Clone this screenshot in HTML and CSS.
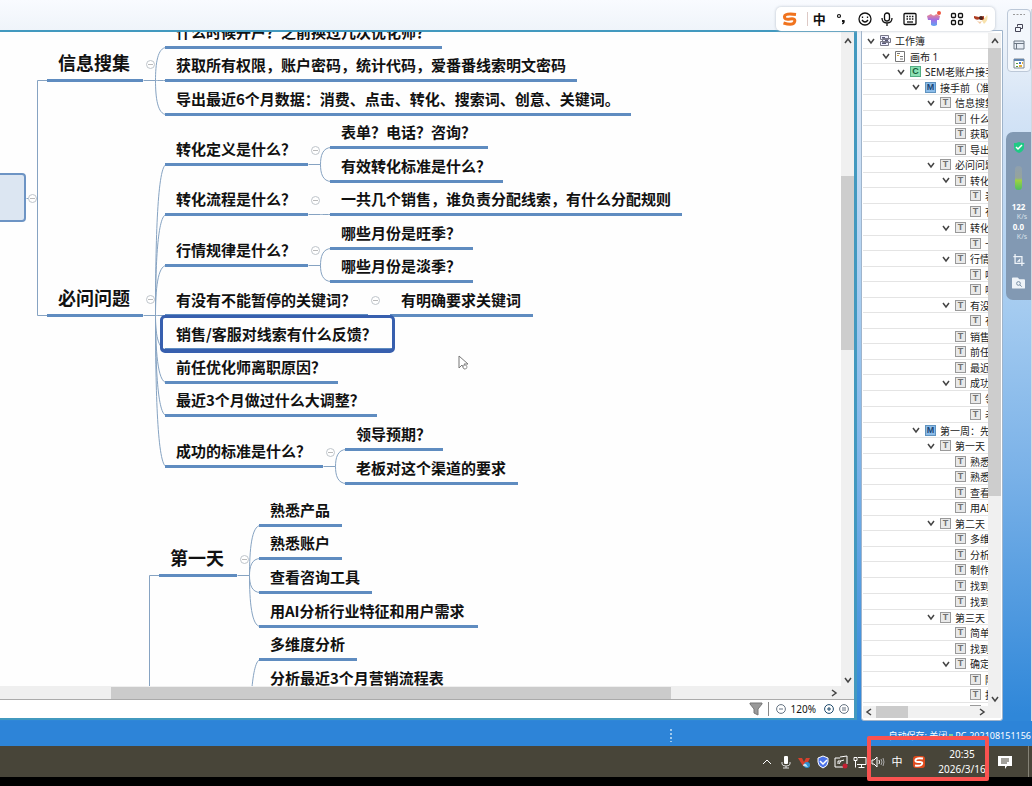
FILE: index.html
```html
<!DOCTYPE html>
<html lang="zh-CN">
<head>
    <meta charset="UTF-8">
    <meta name="viewport" content="width=device-width, initial-scale=1.0">
    <title>SEM老账户接手</title>
    <link rel="stylesheet" href="styles.css">
    <script src="app.js" defer></script>
</head>
<body>
    <div class="desktop">
        <div class="workspace">
            <main class="window">
                <div class="canvas-row">
                    <div class="canvas" id="canvas">
                        <svg class="links" id="links"></svg>
                        <div class="root-topic"></div>
                        <svg class="cursor" viewBox="0 0 10 16"><path d="M1 1v12l3-3 2 4 2-1-2-4h4z" fill="#fff" stroke="#777"/><circle cx="7" cy="12" r="2" fill="#fff" stroke="#999"/></svg>
                    </div>
                    <div class="vscroll">
                        <svg class="chev" viewBox="0 0 8 8"><path d="M1 6l3-4 3 4"/></svg>
                        <div class="vtrack"><div class="vthumb"></div></div>
                        <svg class="chev" viewBox="0 0 8 8"><path d="M1 2l3 4 3-4"/></svg>
                    </div>
                </div>
                <div class="hscroll">
                    <div class="hthumb"></div>
                    <svg class="chev" viewBox="0 0 8 8"><path d="M2 1l4 3-4 3"/></svg>
                </div>
                <div class="zoombar">
                    <button class="plain" aria-label="筛选"><svg width="14" height="14" viewBox="0 0 14 14"><path d="M1 1h12v1L9 7v6l-4-2V7L1 2z" fill="#999" stroke="#777"/></svg></button>
                    <span class="divider"></span>
                    <button class="plain" aria-label="缩小"><svg width="10" height="10" viewBox="0 0 10 10" class="zoom-icon"><circle cx="5" cy="5" r="4.4"/><path d="M3 5h4"/></svg></button>
                    <span class="zoom-value">120%</span>
                    <button class="plain" aria-label="放大"><svg width="10" height="10" viewBox="0 0 10 10" class="zoom-icon strong"><circle cx="5" cy="5" r="4.4"/><path d="M3 5h4M5 3v4"/></svg></button>
                    <button class="plain" aria-label="实际大小"><svg width="10" height="10" viewBox="0 0 10 10" class="zoom-icon"><circle cx="5" cy="5" r="4.4"/><path d="M3 4h4M3 6h4"/></svg></button>
                </div>
            </main>

            <aside class="outline">
                <div class="outline-body">
                    <ul class="tree" id="tree"></ul>
                    <div class="vscroll slim">
                        <svg class="chev" viewBox="0 0 8 8"><path d="M1 6l3-4 3 4"/></svg>
                        <div class="vtrack"><div class="vthumb long"></div></div>
                        <svg class="chev" viewBox="0 0 8 8"><path d="M1 2l3 4 3-4"/></svg>
                    </div>
                </div>
                <div class="outline-scroll">
                    <svg class="chev" viewBox="0 0 8 8"><path d="M6 1L2 4l4 3"/></svg>
                    <div class="outline-thumb"></div>
                    <svg class="chev" viewBox="0 0 8 8"><path d="M2 1l4 3-4 3"/></svg>
                </div>
            </aside>

            <div class="side">
                <div class="dock">
                    <svg width="14" height="3" viewBox="0 0 14 3"><path d="M1 1.500h12" stroke="#999" stroke-width="1" stroke-dasharray="2 1.500"/></svg>
                    <button class="plain" aria-label="还原"><svg width="8" height="8" viewBox="0 0 8 8" fill="none" stroke="#445"><path d="M2.500 2.500v-2h5v4h-2M.5 3.500h5v4h-5z"/></svg></button>
                    <button class="plain" aria-label="概要"><svg width="12" height="10" viewBox="0 0 12 10" fill="#e7edf5" stroke="#6b7683"><path d="M1 1h10v8H1zM1 3.500h10M3.500 3.500V9"/></svg></button>
                    <button class="plain" aria-label="面板"><svg width="12" height="11" viewBox="0 0 12 11"><path d="M1 1h10v9H1z" fill="#fff" stroke="#7c8791"/><path d="M1 2h10" stroke="#6286b0" stroke-width="2"/><path d="M3 5h2v1H3zM3 8h2v1H3z" fill="#5a9b3c"/><path d="M6 4h2v2H6z" fill="#4474c2"/><path d="M9 4h1v2H9zM6 7h3v2H6z" fill="#e2ac38"/></svg></button>
                </div>
                <div class="meter">
                    <svg width="12" height="13" viewBox="0 0 12 13"><path d="M6 1q2 1 5 1v4q0 4-5 6-5-2-5-6V2q3 0 5-1z" fill="#1fc985"/><path d="M3 6l2 2 4-4" fill="none" stroke="#fff" stroke-width="1.500"/></svg>
                    <span class="gauge"></span>
                    <div class="speed"><b>122</b><span class="up">K/s</span><b>0.0</b><span class="down">K/s</span></div>
                    <button class="plain" aria-label="截图"><svg width="14" height="14" viewBox="0 0 14 14" fill="none" stroke="#eef3f8" stroke-width="1.500"><path d="M1 3h10v11M3 0v11h11"/><path d="M5 9l4-4v4z" fill="#eef3f8" stroke="none"/></svg></button>
                    <button class="plain" aria-label="文件搜索"><svg width="14" height="12" viewBox="0 0 14 12"><path d="M1 0h5l2 2h5q1 0 1 1v8q0 1-1 1H1q-1 0-1-1V1q0-1 1-1z" fill="#eef3f8"/><circle cx="7" cy="6.500" r="2" fill="none" stroke="#71889f"/><path d="M8.500 8l2 2" stroke="#71889f"/></svg></button>
                </div>
            </div>
        </div>

        <div class="statusline">
            <span class="grip"></span>
            <span>自动保存: 关闭</span><span class="dot"></span><span>PC-202108151156</span>
        </div>

        <footer class="taskbar">
            <div class="tray">
                <button class="plain" aria-label="显示隐藏的图标"><svg width="14" height="14" viewBox="0 0 14 14" fill="none" stroke="#fff"><path d="M3 9l4-4 4 4"/></svg></button>
                <button class="plain" aria-label="麦克风"><svg width="14" height="14" viewBox="0 0 14 14"><rect x="5" y="1" width="4" height="8" rx="1" fill="#fff"/><path d="M3 7v2q0 2 4 2t4-2V7M7 11v2M4 13h6" fill="none" stroke="#ddd"/></svg></button>
                <button class="plain" aria-label="语音"><svg width="14" height="14" viewBox="0 0 14 14"><path d="M1 3h4l2 4 2-4h4L9 11H6z" fill="#d6402d"/><circle cx="10" cy="10" r="3" fill="#2d92d4"/><path d="M6 11q0-3 3-2l2 3z" fill="#bce1f5"/></svg></button>
                <button class="plain" aria-label="安全"><svg width="14" height="14" viewBox="0 0 14 14"><path d="M7 1l5 2v4q0 4-5 6-5-2-5-6V3z" fill="#4b72e9" stroke="#fff"/><path d="M4 6l3 3 4-4" fill="none" stroke="#fff" stroke-width="1.500"/></svg></button>
                <button class="plain" aria-label="录制"><svg width="14" height="14" viewBox="0 0 14 14" fill="none" stroke="#fff"><path d="M9 12H1V3h5M6 2l7-1v8M4 9V6h3"/><path d="M5 9q1-4 5-4"/><circle cx="11" cy="11" r="2.500" fill="#c51f32" stroke="none"/></svg></button>
                <button class="plain" aria-label="网络"><svg width="14" height="14" viewBox="0 0 14 14" fill="none" stroke="#fff"><path d="M5 2.500h8v7H4M8.500 9.500v3M5.500 12.500h6M1 2.500h3v3H1zM2.500 5.500v7"/></svg></button>
                <button class="plain" aria-label="音量"><svg width="14" height="14" viewBox="0 0 14 14" fill="none" stroke="#fff"><path d="M1 5h2l3-3v10L3 9H1zM8 5q1 2 0 4"/><path d="M10 4q2 3 0 6M12 3q2 4 0 8" stroke="#aaa"/></svg></button>
                <button class="plain lang">中</button>
            </div>
            <button class="plain" aria-label="搜狗输入法"><svg width="14" height="14" viewBox="0 0 14 14"><rect x="1" y="1" width="12" height="12" rx="3" fill="#df4a1c"/><path d="M11 3.500Q4 2.500 3.500 5T7 7t3 2-7 1.500" fill="none" stroke="#fff" stroke-width="2"/></svg></button>
            <div class="clock"><time>20:35</time><time>2026/3/16</time></div>
            <button class="plain" aria-label="通知"><svg width="14" height="14" viewBox="0 0 14 14"><path d="M0 1h14v10H9l-2 3v-3H0z" fill="#fff"/><path d="M3 4h8M3 6h8M3 8h6" stroke="#484539"/></svg></button>
            <span class="peek"></span>
            <div class="highlight"></div>
        </footer>
        <div class="bezel"></div>

        <div class="ime">
            <button class="plain" aria-label="搜狗"><svg width="16" height="14" viewBox="0 0 16 14"><path d="M14 2.500Q3 1 2.500 4.500T8 7t4.500 3T1.500 11" fill="none" stroke="#f0731e" stroke-width="3"/></svg></button>
            <span class="ime-sep"></span>
            <button class="plain ime-lang">中</button>
            <button class="plain" aria-label="标点"><svg width="14" height="14" viewBox="0 0 14 14"><circle cx="4" cy="4" r="1.500" fill="none" stroke="#111" stroke-width="1.200"/><path d="M7 8h2.500q1 3-2 4.500l-.5-1 1-1.500H7z" fill="#111"/></svg></button>
            <button class="plain" aria-label="表情"><svg width="14" height="14" viewBox="0 0 14 14" fill="none" stroke="#111" stroke-width="1.300"><circle cx="7" cy="7" r="6"/><path d="M4 8q3 4 6 0M4.500 4.500v1.500M9.500 4.500v1.500"/></svg></button>
            <button class="plain" aria-label="语音输入"><svg width="14" height="14" viewBox="0 0 14 14" fill="none" stroke="#111" stroke-width="1.300"><rect x="4.500" y="1" width="5" height="8" rx="2.500"/><path d="M2 6q0 5 5 5t5-5M7 11v3"/></svg></button>
            <button class="plain" aria-label="软键盘"><svg width="14" height="14" viewBox="0 0 14 14" fill="none" stroke="#111" stroke-width="1.300"><rect x="1" y="1.500" width="12" height="11" rx="1"/><path d="M3.500 4.500h7M3.500 7h7" stroke-dasharray="1.500 1.200"/><path d="M4 10h6"/></svg></button>
            <button class="plain" aria-label="皮肤"><svg width="16" height="16" viewBox="0 0 16 16"><defs><linearGradient id="skin" x1="0" y1="0" x2="0" y2="1"><stop offset="0" stop-color="#f08a8a"/><stop offset=".5" stop-color="#a06ee6"/><stop offset="1" stop-color="#5da5f2"/></linearGradient></defs><path d="M1 5l4-2q3 3 5 0l4 2-1 4h-2v5q-3 2-6 0V9H2z" fill="url(#skin)"/><circle cx="13" cy="2" r="2" fill="#ee5540"/></svg></button>
            <button class="plain" aria-label="工具箱"><svg width="14" height="14" viewBox="0 0 14 14" fill="none" stroke="#111" stroke-width="1.300"><rect x="1.500" y="1.500" width="4" height="4" rx="1"/><rect x="8.500" y="1.500" width="4" height="4" rx="1"/><rect x="1.500" y="8.500" width="4" height="4" rx="1"/><rect x="8.500" y="8.500" width="4" height="4" rx="1"/></svg></button>
            <button class="plain" aria-label="头像"><svg width="16" height="14" viewBox="0 0 16 14"><path d="M8 7q6-1 6-5 2 6-3 10z" fill="#f8e2ac"/><path d="M1 4l5 1 5-1v3q-2 2-4 0-4 2-6-1z" fill="#ae3c21"/><circle cx="8" cy="6" r="2" fill="#49221c"/><path d="M3 8q3 3 6 1l-2 3z" fill="#f2c7a0"/></svg></button>
        </div>
    </div>
</body>
</html>
```
FILE: styles.css
```css
* {
    box-sizing: border-box;
}
body {
    margin: 0;
    font-family: "Noto Sans", "Noto Sans CJK SC", sans-serif;
    color: #111;
}
.desktop {
    position: relative;
    display: flex;
    flex-direction: column;
    height: 100vh;
    overflow: hidden;
    background: linear-gradient(#f9fbff 0, #eff4fa 30px, #d5e4f6 110px, #a4cbf0 310px, #7bb2e8 470px, #2f87d9 715px);
}
.plain {
    display: flex;
    align-items: center;
    justify-content: center;
    flex: none;
    padding: 0;
    border: 0;
    background: none;
    color: inherit;
    font: inherit;
    cursor: pointer;
}
.workspace {
    display: flex;
    flex: 1;
    min-height: 0;
    gap: 4px;
    padding-top: 30px;
}

/* Mind map window */
.window {
    display: flex;
    flex-direction: column;
    flex: 1;
    min-width: 0;
    margin-bottom: 1px;
    border: solid #4299bf;
    border-width: 2px 3px 2px 0;
    background: #fff;
}
.canvas-row {
    display: flex;
    flex: 1;
    min-height: 0;
}
.canvas {
    position: relative;
    flex: 1;
    overflow: hidden;
    background: #fefefe;
    font-family: "Noto Sans CJK SC", sans-serif;
    font-weight: 700;
}
.links {
    position: absolute;
    inset: 0;
    width: 100%;
    height: 100%;
    fill: none;
    stroke: #86a3c2;
}
.topic {
    position: absolute;
    height: 30px;
    padding: 0 11px;
    border-bottom: 3px solid #5f8cc0;
    font-size: 15px;
    line-height: 26px;
    white-space: nowrap;
    color: #111;
}
.topic.main {
    height: 34px;
    font-size: 18px;
    line-height: 28px;
}
.topic.selected::before {
    content: "";
    position: absolute;
    inset: -6px -3px -5px -5px;
    border: 3px solid #375fae;
    border-bottom-width: 4px;
    border-radius: 5px;
}
.fold {
    position: absolute;
    width: 9px;
    height: 9px;
    padding: 0;
    border: 1px solid #bfc5cb;
    border-radius: 50%;
    background: #fff;
}
.fold::before {
    content: "";
    position: absolute;
    left: 1px;
    right: 1px;
    top: 3px;
    height: 1px;
    background: #bbb;
}
.root-topic {
    position: absolute;
    left: -10px;
    top: 141px;
    width: 36px;
    height: 49px;
    border: 2px solid #6d94c4;
    border-radius: 4px;
    background: #dce6f2;
}
.cursor {
    position: absolute;
    left: 458px;
    top: 323px;
    width: 10px;
    height: 16px;
}

/* Scroll bars */
.chev {
    flex: none;
    width: 8px;
    height: 8px;
    fill: none;
    stroke: #444;
    stroke-width: 1.5;
}
.vscroll {
    display: flex;
    flex-direction: column;
    align-items: center;
    flex: none;
    width: 13px;
    padding: 5px 0 2px;
    background: #f0f0f0;
}
.vtrack {
    flex: 1;
    width: 100%;
    padding-top: 131px;
}
.vthumb {
    height: 174px;
    background: #cdcdcd;
}
.slim {
    padding: 4px 0 3px;
}
.slim .vtrack {
    padding-top: 3px;
}
.vthumb.long {
    height: 448px;
}
.hscroll {
    display: flex;
    align-items: center;
    justify-content: space-between;
    flex: none;
    height: 14px;
    padding: 0 16px 0 13%;
    border-bottom: 1px solid #aaa;
    background: #efefef;
}
.hthumb {
    width: 77%;
    height: 12px;
    background: #cbcbcb;
}
.zoombar {
    display: flex;
    align-items: center;
    justify-content: flex-end;
    flex: none;
    height: 18px;
    padding-right: 5px;
    gap: 5px;
}
.divider {
    width: 1px;
    height: 14px;
    margin-right: 2px;
    background: #888;
}
.zoom-value {
    margin-right: 3px;
    font-size: 10px;
}
.zoom-icon {
    fill: none;
    stroke: #657382;
}
.zoom-icon.strong {
    stroke: #1d4a6c;
}

/* Outline panel */
.outline {
    display: flex;
    flex-direction: column;
    flex: none;
    width: 142px;
    padding: 2px 1px 2px 1px;
    border: 1px solid #9fb4cb;
    border-radius: 0 0 3px 3px;
    background: #fff;
}
.outline-body {
    display: flex;
    flex: 1;
    min-height: 0;
}
.tree {
    flex: 1;
    min-width: 0;
    margin: 0;
    padding: 0;
    overflow: hidden;
    list-style: none;
    font-size: 10px;
    color: #222;
}
.tree li {
    display: flex;
    align-items: center;
    height: 15px;
    border-bottom: 1px solid #e4e4e4;
    white-space: nowrap;
}
.tree li:nth-child(odd),
.tree li:nth-child(12n) {
    height: 16px;
}
.indent {
    flex: none;
}
.toggle {
    width: 15px;
    height: 12px;
}
.kind {
    display: flex;
    align-items: center;
    justify-content: center;
    flex: none;
    width: 11px;
    height: 11px;
    margin: 0 4px 0 2px;
    border: 1px solid #999;
    background: #e9e9e9;
    color: #707070;
    font: 700 9px/9px "Liberation Sans", sans-serif;
}
.kind.C {
    border-color: #53ad83;
    background: #8be0b3;
    color: #155b38;
}
.kind.M {
    border-color: #6093bf;
    background: #8bbce9;
    color: #1a4674;
}
.kind.book,
.kind.page {
    border: 0;
    background: none;
}
.outline-scroll {
    display: flex;
    align-items: center;
    flex: none;
    height: 12px;
    padding: 0 15px 0 2px;
    background: #f1f1f1;
}
.outline-thumb {
    width: 32px;
    height: 12px;
    margin: 0 auto 0 3px;
    background: #cbcbcb;
}

/* Right edge */
.side {
    display: flex;
    flex-direction: column;
    align-items: flex-end;
    flex: none;
    width: 25px;
    margin-top: -21px;
    border-right: 1px solid #d0d8e0;
}
.dock {
    display: flex;
    flex-direction: column;
    align-items: center;
    gap: 8px;
    width: 24px;
    height: 63px;
    padding-top: 3px;
    border: 1px solid #bcc8d8;
    border-radius: 4px;
    background: #f3f7fc;
}
.meter {
    display: flex;
    flex-direction: column;
    align-items: center;
    width: 25px;
    height: 168px;
    margin-top: 60px;
    padding-top: 9px;
    border-radius: 7px 0 0 7px;
    background: #8299b3;
    color: #fff;
}
.gauge {
    width: 7px;
    height: 24px;
    margin: 12px 0;
    border-radius: 4px;
    background: linear-gradient(#8fa0ae 0, #96a39b 50%, #9dd142 60%, #4dbf61);
}
.speed {
    display: flex;
    flex-direction: column;
    align-items: center;
    margin-bottom: 12px;
    font-size: 8px;
    line-height: 10px;
}
.up,
.down {
    padding-left: 7px;
    color: #d8e1ea;
    font-size: 7px;
}
.meter button {
    margin-bottom: 11px;
}
.meter button svg {
    width: 13px;
    height: 12px;
}

/* Bottom bars */
.statusline {
    display: flex;
    align-items: center;
    justify-content: flex-end;
    flex: none;
    height: 25px;
    padding: 4px 1px 0 0;
    gap: 2px;
    background: #2d84d8;
    color: #fff;
    font-size: 9px;
}
.grip {
    width: 2px;
    height: 13px;
    margin-right: auto;
    margin-left: 65%;
    background: repeating-linear-gradient(#a2caed 0 2px, transparent 2px 4px);
}
.dot {
    width: 4px;
    height: 4px;
    background: #7cd0a0;
}
.taskbar {
    position: relative;
    display: flex;
    align-items: center;
    justify-content: flex-end;
    flex: none;
    height: 31px;
    padding-right: 3px;
    background: #484539;
    color: #fff;
    font-size: 10px;
}
.tray {
    display: flex;
    justify-content: space-between;
    width: 144px;
    margin-right: 8px;
}
.lang {
    width: 14px;
    font-size: 11px;
    line-height: 14px;
}
.clock {
    display: flex;
    flex-direction: column;
    align-items: center;
    width: 48px;
    margin: 0 12px;
    line-height: 15px;
}
.peek {
    width: 1px;
    height: 100%;
    margin-left: 16px;
    background: #858276;
}
.highlight {
    position: absolute;
    right: 43px;
    top: -10px;
    width: 122px;
    height: 45px;
    border: 4px solid #fa5250;
    border-radius: 2px;
}
.bezel {
    flex: none;
    height: 9px;
    background: #000;
}

/* Input method bar */
.ime {
    position: absolute;
    top: 7px;
    right: 37px;
    display: flex;
    align-items: center;
    justify-content: space-between;
    width: 219px;
    height: 24px;
    padding: 0 6px;
    border-radius: 5px;
    background: #fff;
    box-shadow: 0 0 3px #b6bec9;
}
.ime-sep {
    width: 1px;
    height: 14px;
    background: #ddc9c5;
}
.ime-lang {
    width: 14px;
    margin-left: -4px;
    font-size: 13px;
    font-weight: 700;
    line-height: 20px;
}
```
FILE: app.js
```js
// Canvas starts below the window's top edge
const TOP = 32;

// x, y of the underline, width, text
const topics = [
    [47, 80, 96, '信息搜集', 'main'],
    [165, 47, 277, '什么时候开户？之前换过几次优化师？'],
    [165, 80, 412, '获取所有权限，账户密码，统计代码，爱番番线索明文密码'],
    [165, 114, 466, '导出最近6个月数据：消费、点击、转化、搜索词、创意、关键词。'],
    [47, 315, 96, '必问问题', 'main'],
    [165, 164, 143, '转化定义是什么？'],
    [330, 147, 158, '表单？电话？咨询？'],
    [330, 181, 173, '有效转化标准是什么？'],
    [165, 214, 143, '转化流程是什么？'],
    [330, 214, 352, '一共几个销售，谁负责分配线索，有什么分配规则'],
    [165, 265, 143, '行情规律是什么？'],
    [330, 248, 143, '哪些月份是旺季？'],
    [330, 281, 143, '哪些月份是淡季？'],
    [165, 315, 203, '有没有不能暂停的关键词？'],
    [390, 315, 143, '有明确要求关键词'],
    [165, 349, 227, '销售/客服对线索有什么反馈？', 'selected'],
    [165, 382, 173, '前任优化师离职原因？'],
    [165, 415, 212, '最近3个月做过什么大调整？'],
    [165, 466, 158, '成功的标准是什么？'],
    [345, 449, 98, '领导预期？'],
    [345, 483, 173, '老板对这个渠道的要求'],
    [159, 575, 78, '第一天', 'main'],
    [259, 525, 83, '熟悉产品'],
    [259, 558, 83, '熟悉账户'],
    [259, 592, 113, '查看咨询工具'],
    [259, 626, 219, '用AI分析行业特征和用户需求'],
    [259, 659, 98, '多维度分析'],
    [259, 693, 197, '分析最近3个月营销流程表']
];

// start x, y, junction x, child x, child lines
const links = [
    [143, 80, 155, 166, [47, 80, 114]],
    [143, 315, 155, 166, [164, 214, 265, 315, 349, 382, 415, 466]],
    [308, 164, 320, 331, [147, 181]],
    [308, 214, 320, 331, [214]],
    [308, 265, 320, 331, [248, 281]],
    [368, 315, 380, 391, [315]],
    [323, 466, 335, 346, [449, 483]],
    [237, 575, 249, 260, [525, 558, 592, 626]],
    [249, 760, 249, 260, [659, 693]]
];

const folds = [[32, 198], [150, 64], [315, 150], [315, 200], [315, 250],
    [150, 299], [375, 300], [330, 452], [244, 559]];

// level, icon, text, has children
const rows = [
    [0, 'book', '工作簿', 1], [1, 'page', '画布 1', 1], [2, 'C', 'SEM老账户接手', 1],
    [3, 'M', '接手前（准备', 1], [4, 'T', '信息搜集', 1],
    [5, 'T', '什么'], [5, 'T', '获取'], [5, 'T', '导出'],
    [4, 'T', '必问问题', 1],
    [5, 'T', '转化', 1], [6, 'T', '表单'], [6, 'T', '有效'],
    [5, 'T', '转化', 1], [6, 'T', '一共'],
    [5, 'T', '行情', 1], [6, 'T', '哪些'], [6, 'T', '哪些'],
    [5, 'T', '有没', 1], [6, 'T', '有明'],
    [5, 'T', '销售'], [5, 'T', '前任'], [5, 'T', '最近'],
    [5, 'T', '成功', 1], [6, 'T', '领导'], [6, 'T', '老板'],
    [3, 'M', '第一周：先', 1], [4, 'T', '第一天', 1],
    [5, 'T', '熟悉'], [5, 'T', '熟悉'], [5, 'T', '查看'], [5, 'T', '用AI'],
    [4, 'T', '第二天', 1],
    [5, 'T', '多维'], [5, 'T', '分析'], [5, 'T', '制作'], [5, 'T', '找到'], [5, 'T', '找到'],
    [4, 'T', '第三天', 1],
    [5, 'T', '简单'], [5, 'T', '找到'], [5, 'T', '确定', 1],
    [6, 'T', '降'], [6, 'T', '找'], [6, 'T', '找']
];

const bookIcon = '<svg width="11" height="11" viewBox="0 0 11 11" fill="#eef" stroke="#778"><path d="M.5.5h8v4h-8zM2.500 3.500h8v4h-8zM.5 6.500h8v4h-8z"/><path d="M2 2.500h3M5 5.500h3M2 8.500h4" stroke="#557"/></svg>';
const pageIcon = '<svg width="11" height="11" viewBox="0 0 11 11" fill="#fff" stroke="#777"><path d="M.5.5h9v10h-9zM2 2.500h3M5 5.500h3M5 8h3"/><path d="M2 4.500h2" stroke="#d4a63e"/></svg>';
const arrow = '<svg class="chev" viewBox="0 0 8 8"><path d="M1 2l3 4 3-4"/></svg>';

const canvas = document.getElementById('canvas');
topics.forEach(([x, y, w, text, type]) => {
    const el = document.createElement('div');
    el.className = 'topic ' + (type || '');
    el.textContent = text;
    el.style.left = x + 'px';
    el.style.top = (y - TOP - (type === 'main' ? 32 : 28)) + 'px';
    el.style.width = w + 'px';
    canvas.appendChild(el);
});

let d = 'M26 166H37M47 48H37V283H47M159 543H149V700';
links.forEach(([x, y, jx, cx, children]) => {
    d += `M${x} ${y - TOP}H${jx}`;
    children.forEach(cy => {
        const mid = (y + cy) / 2 - TOP;
        d += `M${jx} ${y - TOP}C${jx} ${mid} ${jx + 2} ${cy - TOP} ${cx} ${cy - TOP}`;
    });
});
document.getElementById('links').innerHTML = `<path transform="translate(.5 .5)" d="${d}"/>`;

folds.forEach(([x, y]) => {
    const btn = document.createElement('button');
    btn.className = 'fold';
    btn.setAttribute('aria-label', '折叠');
    btn.style.left = (x - 4) + 'px';
    btn.style.top = (y - TOP - 4) + 'px';
    canvas.appendChild(btn);
});

document.getElementById('tree').innerHTML = rows.map(([level, kind, text, open]) => {
    const icon = kind === 'book' ? bookIcon : kind === 'page' ? pageIcon : kind;
    const toggle = open ? `<button class="plain toggle" aria-label="折叠">${arrow}</button>` : '';
    const indent = level * 15 + (open ? 0 : 15);
    return `<li><span class="indent" style="width:${indent}px"></span>${toggle}<span class="kind ${kind}">${icon}</span>${text}</li>`;
}).join('');
```
